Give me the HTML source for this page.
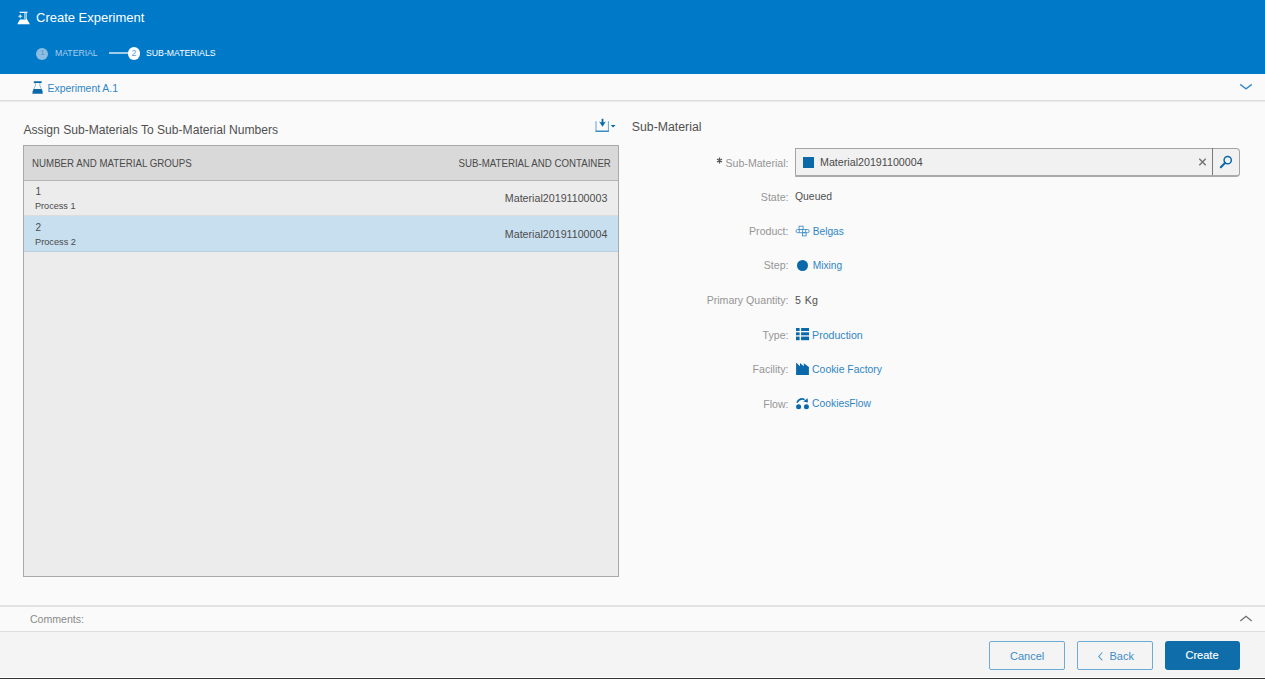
<!DOCTYPE html>
<html><head><meta charset="utf-8"><title>Create Experiment</title>
<style>
html,body{margin:0;padding:0;}
body{width:1265px;height:679px;overflow:hidden;position:relative;background:#fafafa;font-family:"Liberation Sans",sans-serif;}
.t{position:absolute;white-space:nowrap;}
svg{overflow:visible}
</style></head><body>
<div style="position:absolute;left:0;top:0;width:1265px;height:74px;background:#0079c9"></div>
<svg style="position:absolute;left:14px;top:8px" width="20" height="20" viewBox="0 0 20 20">
<rect x="5.6" y="3.7" width="7.9" height="1.2" fill="#fff"/>
<path d="M10.7 4.9 V11" stroke="#fff" stroke-width="0.8" opacity="0.85"/>
<path d="M11.6 4.9 L12.6 4.9 L12.6 10.4 L15.9 16.2 L3.3 16.2 L5.9 11.5 L11.6 11.5 Z" fill="#fff"/>
<path d="M6.2 5.9 Q6.6 7.8 8.7 8.2 Q6.6 8.6 6.2 10.6 Q5.8 8.6 3.8 8.2 Q5.8 7.8 6.2 5.9 Z" fill="#d2e6f5"/>
</svg>
<div class="t" style="left:36.30px;top:11.29px;font-size:13.6px;line-height:13.6px;color:#fff;transform:scaleX(0.9554);transform-origin:left 50%;">Create Experiment</div>
<div style="position:absolute;left:36.4px;top:47.5px;width:12px;height:12px;border-radius:50%;background:#8dbde0"></div>
<div class="t" style="left:40.20px;top:49.03px;font-size:8px;line-height:8px;color:#4f97d0;">1</div>
<div class="t" style="left:55.00px;top:48.47px;font-size:9.6px;line-height:9.6px;color:#a9cdea;transform:scaleX(0.9031);transform-origin:left 50%;">MATERIAL</div>
<div style="position:absolute;left:109px;top:52px;width:19px;height:2px;background:#a3cbea"></div>
<div style="position:absolute;left:127.8px;top:47.3px;width:12.6px;height:12.6px;border-radius:50%;background:#fff"></div>
<div class="t" style="left:131.60px;top:49.18px;font-size:9px;line-height:9px;color:#5aa0d8;">2</div>
<div class="t" style="left:146.20px;top:48.47px;font-size:9.6px;line-height:9.6px;color:#fff;transform:scaleX(0.9080);transform-origin:left 50%;">SUB-MATERIALS</div>
<div style="position:absolute;left:0;top:74px;width:1265px;height:26px;background:#fafafa;border-bottom:1px solid #dcdcdc"></div><div style="position:absolute;left:0;top:101px;width:1265px;height:1px;background:#ececec"></div>
<svg style="position:absolute;left:28px;top:77px" width="20" height="20" viewBox="0 0 20 20">
<rect x="5.7" y="4.3" width="8.1" height="1.6" rx="0.6" fill="#0b68a9"/>
<path d="M7.4 5.9 L7.4 8.6 L4.6 15 M11.9 5.9 L11.9 8.6 L14.7 15" fill="none" stroke="#0b68a9" stroke-width="0.8" opacity="0.55"/>
<path d="M5.6 11.9 L13.6 11.9 L14.9 16.8 L4.2 16.8 Z" fill="#0b68a9"/>
</svg>
<div class="t" style="left:47.50px;top:83.50px;font-size:10.4px;line-height:10.4px;color:#3086c4;">Experiment A.1</div>
<svg style="position:absolute;left:1238px;top:82px" width="16" height="10" viewBox="0 0 16 10"><path d="M2.2 2.4 L8 6.8 L13.8 2.4" fill="none" stroke="#3a8bcb" stroke-width="1.35"/></svg>
<div class="t" style="left:23.50px;top:123.56px;font-size:12.1px;line-height:12.1px;color:#505050;">Assign Sub-Materials To Sub-Material Numbers</div>
<svg style="position:absolute;left:590px;top:114px" width="30" height="22" viewBox="0 0 30 22">
<path d="M6 7.2 L6 17.2 L18.4 17.2 L18.4 7.2" fill="none" stroke="#3086c4" stroke-width="1" opacity="0.75"/>
<path d="M5.5 17.3 H18.9" stroke="#3086c4" stroke-width="1.2"/>
<rect x="11.6" y="4.8" width="1.8" height="4.2" fill="#0b68a9"/>
<path d="M9.1 7.6 Q12.5 9.4 15.9 7.6 L12.5 12.8 Z" fill="#0b68a9"/>
<path d="M20.7 11 L25.6 11 L23.15 13.4 Z" fill="#0b68a9"/>
</svg>
<div style="position:absolute;left:23px;top:145px;width:594px;height:430px;background:#ececec;border:1px solid #a9a9a9"></div>
<div style="position:absolute;left:24px;top:146px;width:594px;height:34px;background:#d9d9d9;border-bottom:1px solid #b5b5b5"></div>
<div class="t" style="left:32.40px;top:157.94px;font-size:10.7px;line-height:10.7px;color:#4a4a4a;transform:scaleX(0.9093);transform-origin:left 50%;">NUMBER AND MATERIAL GROUPS</div>
<div class="t" style="right:654.30px;top:157.94px;font-size:10.7px;line-height:10.7px;color:#4a4a4a;transform:scaleX(0.9075);transform-origin:right 50%;">SUB-MATERIAL AND CONTAINER</div>
<div style="position:absolute;left:24px;top:181px;width:594px;height:34px;background:#ececec;border-bottom:1px solid #dcdcdc"></div>
<div class="t" style="left:35.50px;top:186.53px;font-size:10px;line-height:10px;color:#4a4a4a;">1</div>
<div class="t" style="left:35.40px;top:201.30px;font-size:9.8px;line-height:9.8px;color:#4a4a4a;transform:scaleX(0.9297);transform-origin:left 50%;">Process 1</div>
<div class="t" style="right:657.60px;top:193.14px;font-size:10.7px;line-height:10.7px;color:#4d4d4d;">Material20191100003</div>
<div style="position:absolute;left:24px;top:216px;width:594px;height:35px;background:#c8dff0;border-bottom:1px solid #b8cfe0"></div>
<div class="t" style="left:35.50px;top:222.53px;font-size:10px;line-height:10px;color:#4a4a4a;">2</div>
<div class="t" style="left:35.40px;top:236.50px;font-size:9.8px;line-height:9.8px;color:#4a4a4a;transform:scaleX(0.9412);transform-origin:left 50%;">Process 2</div>
<div class="t" style="right:657.60px;top:228.54px;font-size:10.7px;line-height:10.7px;color:#4d4d4d;">Material20191100004</div>
<div class="t" style="left:631.80px;top:120.59px;font-size:12.3px;line-height:12.3px;color:#505050;">Sub-Material</div>
<div class="t" style="right:476.50px;top:157.83px;font-size:10.6px;line-height:10.6px;color:#959595;">Sub-Material:</div>
<div class="t" style="right:476.50px;top:191.53px;font-size:10.6px;line-height:10.6px;color:#959595;">State:</div>
<div class="t" style="right:476.50px;top:226.03px;font-size:10.6px;line-height:10.6px;color:#959595;">Product:</div>
<div class="t" style="right:476.50px;top:260.03px;font-size:10.6px;line-height:10.6px;color:#959595;">Step:</div>
<div class="t" style="right:476.50px;top:295.03px;font-size:10.6px;line-height:10.6px;color:#959595;">Primary Quantity:</div>
<div class="t" style="right:476.50px;top:329.53px;font-size:10.6px;line-height:10.6px;color:#959595;">Type:</div>
<div class="t" style="right:476.50px;top:364.03px;font-size:10.6px;line-height:10.6px;color:#959595;">Facility:</div>
<div class="t" style="right:476.50px;top:398.53px;font-size:10.6px;line-height:10.6px;color:#959595;">Flow:</div>
<svg style="position:absolute;left:716px;top:157px" width="8" height="8" viewBox="0 0 8 8"><path d="M3.5 0.6 V6.4 M1 2 L6 5 M6 2 L1 5" stroke="#555" stroke-width="1.2"/></svg>
<div style="position:absolute;left:795px;top:147.5px;width:445px;height:29px;background:#f1f1f1;border:1px solid #a3a3a3;border-bottom:2px solid #aaaaaa;border-radius:0 4px 4px 0;box-sizing:border-box"></div>
<div style="position:absolute;left:1212px;top:148px;width:1px;height:27px;background:#7a7a7a"></div>
<div style="position:absolute;left:802.7px;top:157.3px;width:11px;height:11px;background:#0b68a9"></div>
<div class="t" style="left:820.00px;top:156.94px;font-size:10.7px;line-height:10.7px;color:#4a4a4a;">Material20191100004</div>
<svg style="position:absolute;left:1196px;top:156px" width="12" height="12" viewBox="0 0 12 12"><path d="M3.3 2.8 L9.7 9.2 M9.7 2.8 L3.3 9.2" stroke="#707070" stroke-width="1.35"/></svg>
<svg style="position:absolute;left:1216px;top:152px" width="18" height="18" viewBox="0 0 18 18"><circle cx="11.7" cy="8.2" r="3.6" fill="none" stroke="#0b68a9" stroke-width="1.5"/><path d="M9.2 10.8 L4.8 15.2" stroke="#0b68a9" stroke-width="2" stroke-linecap="round"/></svg>
<div class="t" style="left:795.00px;top:192.00px;font-size:10.4px;line-height:10.4px;color:#505050;">Queued</div>
<svg style="position:absolute;left:792px;top:221px" width="22" height="20" viewBox="0 0 22 20">
<g fill="none" stroke="#3086c4" stroke-width="0.9" opacity="0.9">
<rect x="4" y="8.5" width="13.2" height="3.2" rx="1.6"/>
<rect x="7.1" y="5.2" width="4" height="3.3"/>
<rect x="10.5" y="11.7" width="3.6" height="3.2"/>
<path d="M7.3 8.5 V11.7 M10.6 8.5 V11.7 M13.7 8.5 V11.7"/>
</g></svg>
<div class="t" style="left:812.70px;top:227.07px;font-size:10.2px;line-height:10.2px;color:#3086c4;">Belgas</div>
<div style="position:absolute;left:797px;top:259.7px;width:11px;height:11px;border-radius:50%;background:#0b68a9"></div>
<div class="t" style="left:812.70px;top:261.37px;font-size:10.2px;line-height:10.2px;color:#3086c4;">Mixing</div>
<div class="t" style="left:795.00px;top:295.33px;font-size:10.6px;line-height:10.6px;color:#505050;word-spacing:1px;">5 Kg</div>
<svg style="position:absolute;left:792px;top:324px" width="22" height="20" viewBox="0 0 22 20">
<g fill="#0b68a9">
<rect x="4" y="4" width="3.6" height="3"/><rect x="9.1" y="4" width="7.9" height="3"/>
<rect x="4" y="8.3" width="3.6" height="3"/><rect x="9.1" y="8.3" width="7.9" height="3"/>
<rect x="4" y="12.6" width="3.6" height="3.6"/><rect x="9.1" y="12.6" width="7.9" height="3.6"/>
</g></svg>
<div class="t" style="left:812.10px;top:329.53px;font-size:10.6px;line-height:10.6px;color:#3086c4;">Production</div>
<svg style="position:absolute;left:792px;top:358px" width="22" height="20" viewBox="0 0 22 20">
<path d="M4.1 4.6 L8 8.2 L8 4.9 L11.8 8.2 L11.8 5.3 L16.9 9 L16.9 17 L4.1 17 Z" fill="#0b68a9"/>
</svg>
<div class="t" style="left:812.10px;top:365.00px;font-size:10.4px;line-height:10.4px;color:#3086c4;">Cookie Factory</div>
<svg style="position:absolute;left:792px;top:393px" width="22" height="20" viewBox="0 0 22 20">
<g fill="#0b68a9">
<circle cx="6.6" cy="13.8" r="2.5"/><circle cx="14.4" cy="13.8" r="2.5"/>
<path d="M5.3 9.2 Q7.5 5 12 6.2" fill="none" stroke="#0b68a9" stroke-width="1.6" stroke-linecap="round"/>
<path d="M11.2 8.6 L15.9 9.4 L15.6 5.2 Z"/>
</g></svg>
<div class="t" style="left:812.10px;top:398.78px;font-size:10.3px;line-height:10.3px;color:#3086c4;">CookiesFlow</div>
<div style="position:absolute;left:0;top:605px;width:1265px;height:2px;background:#e2e2e2"></div>
<div style="position:absolute;left:0;top:607px;width:1265px;height:24px;background:#fafafa;border-bottom:1px solid #dedede"></div>
<div class="t" style="left:29.90px;top:613.53px;font-size:10.6px;line-height:10.6px;color:#8a8a8a;">Comments:</div>
<svg style="position:absolute;left:1238px;top:613px" width="16" height="10" viewBox="0 0 16 10"><path d="M2.3 8 L8 3.3 L13.7 8" fill="none" stroke="#707070" stroke-width="1.3"/></svg>
<div style="position:absolute;left:0;top:632px;width:1265px;height:45px;background:#f4f4f4"></div>
<div style="position:absolute;left:0;top:677px;width:1265px;height:1px;background:#ffffff"></div><div style="position:absolute;left:0;top:678px;width:1265px;height:1px;background:#333333"></div>
<div style="position:absolute;left:989px;top:641px;width:76px;height:29px;border:1px solid #6eaad6;border-radius:2px;box-sizing:border-box;background:transparent"></div>
<div class="t" style="left:1010.00px;top:650.69px;font-size:11px;line-height:11px;color:#3f8dc8;">Cancel</div>
<div style="position:absolute;left:1077px;top:641px;width:76px;height:29px;border:1px solid #6eaad6;border-radius:2px;box-sizing:border-box;background:transparent"></div>
<svg style="position:absolute;left:1095px;top:649px" width="10" height="14" viewBox="0 0 10 14"><path d="M7.3 3.5 L3.7 7.4 L7.3 11.3" fill="none" stroke="#5a9fd4" stroke-width="1.1"/></svg>
<div class="t" style="left:1109.50px;top:650.69px;font-size:11px;line-height:11px;color:#3f8dc8;">Back</div>
<div style="position:absolute;left:1165px;top:641px;width:75px;height:29px;border-radius:3px;background:#0f6ea9"></div>
<div class="t" style="left:1185.50px;top:650.29px;font-size:11px;line-height:11px;color:#fff;-webkit-text-stroke:0.15px #fff;">Create</div>
</body></html>
